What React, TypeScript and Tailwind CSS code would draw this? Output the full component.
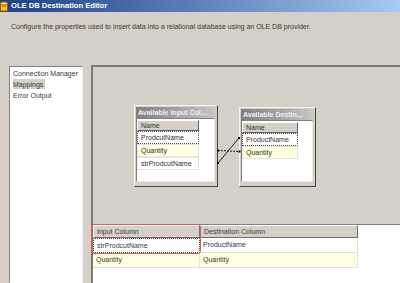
import React from 'react';

const Box = ({
  pos,
  title,
  listW,
  rows,
}: {
  pos: string;
  title: string;
  listW: string;
  rows: { label: string; kind: 'focus' | 'alt' | 'plain' }[];
}) => (
  <div className={`absolute ${pos} bg-[#d4d0c8] border border-t-[#f4f4f4] border-l-[#f4f4f4] border-r-[#404040] border-b-[#404040] p-[1px] flex flex-col`}>
    <div className="h-[11px] shrink-0 bg-linear-to-r from-[#808080] to-[#c8c8c8] text-[#f0f0f0] font-bold text-[7px] leading-[11px] pl-[2px] whitespace-nowrap overflow-hidden">
      {title}
    </div>
    <div className="flex-1 mr-[1px] mb-[3px] bg-white border border-t-[#808080] border-l-[#808080] border-r-[#e8e8e8] border-b-[#e8e8e8] pt-[1px]">
      <div className={`${listW} h-[11px] bg-[#d4d0c8] border border-t-white border-l-white border-r-[#606060] border-b-[#606060] text-[7px] leading-[9px] pl-[3px] text-[#333]`}>
        Name
      </div>
      {rows.map(r => (
        <div
          key={r.label}
          className={`${listW} h-[13px] text-[7px] leading-[11px] pl-[3px] text-[#333] ${
            r.kind === 'focus'
              ? 'bg-white border border-dotted border-[#505050]'
              : r.kind === 'alt'
              ? 'bg-[#ffffe1] border border-[#e6e4dc]'
              : 'bg-white border border-[#e6e4dc]'
          }`}
        >
          {r.label}
        </div>
      ))}
    </div>
  </div>
);

export default function App() {
  return (
    <div className="w-[400px] h-[283px] overflow-hidden bg-[#d4d0c8] flex flex-col font-['Liberation_Sans',Arial,sans-serif]">
      {/* barra de título */}
      <div className="h-[12px] shrink-0 flex items-center bg-linear-to-r from-[#1d3f86] to-[#a6caf0]">
        <svg width="9" height="11" viewBox="0 0 9 11" className="shrink-0">
          <rect x="0.5" y="2" width="7" height="8" fill="#f2c230" stroke="#9a5a00" strokeWidth="1" />
          <ellipse cx="4" cy="2.5" rx="3.5" ry="1.6" fill="#ffe27a" stroke="#9a5a00" strokeWidth="1" />
          <rect x="2" y="5" width="4" height="1" fill="#c07a00" />
        </svg>
        <span className="ml-[2px] text-white font-bold text-[7.6px] leading-[12px] whitespace-nowrap">OLE DB Destination Editor</span>
      </div>

      {/* descrição */}
      <div className="h-[53px] shrink-0 pl-[11px] pt-[10px] text-[7px] leading-[9px] text-[#3a3a3a] whitespace-nowrap">
        Configure the properties used to insert data into a relational database using an OLE DB provider.
      </div>

      <div className="flex-1 flex pl-[9px] min-h-0">
        {/* lista de páginas */}
        <div className="w-[74px] mt-[1px] bg-white border border-t-[#808080] border-l-[#808080] border-r-[#eeeeee] border-b-white pt-[1px] pl-[3px] text-[7px] leading-[11px] text-[#3a3a3a]">
          <div className="h-[11px] whitespace-nowrap">Connection Manager</div>
          <div className="h-[11px]">
            <span className="bg-[#d4d0c8] inline-block h-[10px] pr-[2px]">Mappings</span>
          </div>
          <div className="h-[11px]">Error Output</div>
        </div>

        {/* painel de mapeamentos */}
        <div className="ml-[8px] flex-1 flex flex-col border-t-2 border-l-2 border-[#7c7a76]">
          <div className="h-[157px] shrink-0 relative">
            <Box
              pos="left-[41px] top-[38px] w-[84px] h-[82px]"
              title="Available Input Col..."
              listW="w-[62px]"
              rows={[
                { label: 'ProdcutName', kind: 'focus' },
                { label: 'Quantity', kind: 'alt' },
                { label: 'strProdcutName', kind: 'plain' },
              ]}
            />
            <Box
              pos="left-[146px] top-[40px] w-[77px] h-[80px]"
              title="Available Destin..."
              listW="w-[56px]"
              rows={[
                { label: 'ProductName', kind: 'focus' },
                { label: 'Quantity', kind: 'alt' },
              ]}
            />
            <svg className="absolute inset-0 pointer-events-none" width="307" height="157">
              <line x1="125" y1="83.5" x2="147" y2="84.5" stroke="#202020" strokeWidth="1" strokeDasharray="2 1" />
              <line x1="125" y1="96" x2="146" y2="71" stroke="#202020" strokeWidth="1" />
              <rect x="124" y="82.5" width="2" height="2" fill="#000" />
              <rect x="124" y="95" width="2" height="2" fill="#000" />
              <rect x="145" y="70" width="2" height="2" fill="#000" />
              <rect x="145.5" y="83.5" width="2" height="2" fill="#000" />
            </svg>
          </div>

          {/* grade de colunas */}
          <div className="flex-1 relative bg-white border-t border-[#808080] text-[7px] text-[#3a3a3a]">
            <div className="flex h-[13px]">
              <div className="w-[107px] bg-[#d4d0c8] border border-t-white border-l-white border-r-[#707070] border-b-[#707070] pl-[3px] leading-[11px]">Input Column</div>
              <div className="w-[158px] bg-[#d4d0c8] border border-t-white border-l-white border-r-[#707070] border-b-[#707070] pl-[3px] leading-[11px] whitespace-nowrap">Destination Column</div>
            </div>
            <div className="flex h-[15px]">
              <div className="w-[107px] border border-dotted border-[#404040] pl-[3px] leading-[13px]">strProdcutName</div>
              <div className="w-[158px] border-b border-r border-[#e2e0da] pl-[3px] leading-[14px]">ProductName</div>
            </div>
            <div className="flex h-[15px]">
              <div className="w-[107px] bg-[#ffffe1] border-b border-r border-[#e2e0da] pl-[3px] leading-[14px]">Quantity</div>
              <div className="w-[158px] bg-[#ffffe1] border-b border-r border-[#e2e0da] pl-[3px] leading-[14px]">Quantity</div>
            </div>
            <div className="absolute left-[-2px] top-[-1px] w-[110px] h-[30px] rounded-[3px] border border-[#e05a5a] pointer-events-none" />
          </div>
        </div>
      </div>
    </div>
  );
}
